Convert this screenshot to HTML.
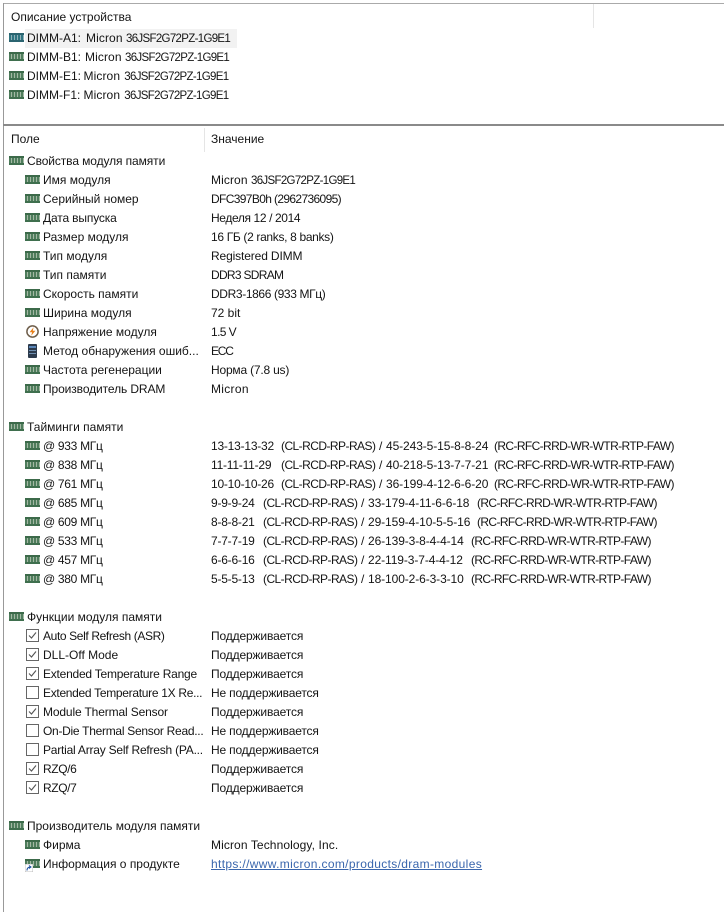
<!DOCTYPE html>
<html lang="ru"><head><meta charset="utf-8"><style>
html,body{margin:0;padding:0;background:#fff}
body{position:relative;width:724px;height:912px;overflow:hidden;font-family:"Liberation Sans",sans-serif;font-size:12px;color:#141414}
.t{position:absolute;height:19px;line-height:19px;white-space:nowrap}
.l{position:absolute;background:#a0a0a0}
.m{position:absolute;width:15px;height:9px;background:repeating-linear-gradient(90deg,#4f7d5c 0 2px,#a3b8a4 2px 3px);border-top:2px solid #3c6a4a;border-bottom:2px solid #3f6f4e;box-sizing:border-box}
.c{position:absolute;width:11px;height:11px;border:1px solid #666;background:#fff}
.c svg{position:absolute;left:0;top:0}
.t.pn{font-size:11.5px;letter-spacing:-.68px;line-height:21px}
.k{letter-spacing:.1px}
.p{letter-spacing:-.14px}
.n{letter-spacing:-.18px}
.a{letter-spacing:-.3px}
.x1{letter-spacing:-.22px}
.x2{letter-spacing:-.55px}
.x3{letter-spacing:-.1px}
.x4{letter-spacing:-.62px}
</style></head><body>
<div class="l" style="left:3px;top:3px;width:721px;height:1px;background:#aaa"></div>
<div class="l" style="left:3px;top:3px;width:1px;height:909px;background:#999"></div>
<div class="l" style="left:3px;top:124px;width:721px;height:2px;background:#8a8a8a"></div>
<div class="l" style="left:593px;top:4px;width:1px;height:24px;background:#e5e5e5"></div>
<div class="l" style="left:204px;top:128px;width:1px;height:24px;background:#e5e5e5"></div>
<div class="l" style="left:25px;top:29px;width:212px;height:19px;background:#f2f2f2"></div>

<div class="t" style="left:11px;top:8px">Описание устройства</div>
<div class="m" style="left:9px;top:33px;background:repeating-linear-gradient(90deg,#2f7480 0 2px,#8fb0b8 2px 3px);border-color:#2b6470"></div><div class="t" style="left:27px;top:29px">DIMM-A1:</div><div class="t k" style="left:86px;top:29px">Micron</div><div class="t pn" style="left:126px;top:29px">36JSF2G72PZ-1G9E1</div>
<div class="m" style="left:9px;top:52px"></div><div class="t" style="left:27px;top:48px">DIMM-B1:</div><div class="t k" style="left:85px;top:48px">Micron</div><div class="t pn" style="left:125px;top:48px">36JSF2G72PZ-1G9E1</div>
<div class="m" style="left:9px;top:71px"></div><div class="t" style="left:27px;top:67px">DIMM-E1:</div><div class="t k" style="left:83.5px;top:67px">Micron</div><div class="t pn" style="left:124.3px;top:67px">36JSF2G72PZ-1G9E1</div>
<div class="m" style="left:9px;top:90px"></div><div class="t" style="left:27px;top:86px">DIMM-F1:</div><div class="t k" style="left:83.5px;top:86px">Micron</div><div class="t pn" style="left:124.3px;top:86px">36JSF2G72PZ-1G9E1</div>

<div class="t" style="left:11px;top:130px">Поле</div>
<div class="t" style="left:211px;top:130px">Значение</div>

<div class="m" style="left:9px;top:156px"></div><div class="t" style="left:27px;top:152px;letter-spacing:-.1px">Свойства модуля памяти</div>
<div class="m" style="left:25px;top:175px"></div><div class="t" style="left:43px;top:171px">Имя модуля</div><div class="t k" style="left:211px;top:171px">Micron</div><div class="t pn" style="left:251px;top:171px">36JSF2G72PZ-1G9E1</div>
<div class="m" style="left:25px;top:194px"></div><div class="t" style="left:43px;top:190px">Серийный номер</div><div class="t" style="left:211px;top:190px;letter-spacing:-.64px">DFC397B0h (2962736095)</div>
<div class="m" style="left:25px;top:213px"></div><div class="t" style="left:43px;top:209px;letter-spacing:-.15px">Дата выпуска</div><div class="t" style="left:211px;top:209px;letter-spacing:-.38px">Неделя 12 / 2014</div>
<div class="m" style="left:25px;top:232px"></div><div class="t" style="left:43px;top:228px">Размер модуля</div><div class="t" style="left:211px;top:228px;letter-spacing:-.33px">16 ГБ (2 ranks, 8 banks)</div>
<div class="m" style="left:25px;top:251px"></div><div class="t" style="left:43px;top:247px">Тип модуля</div><div class="t" style="left:211px;top:247px;letter-spacing:-.13px">Registered DIMM</div>
<div class="m" style="left:25px;top:270px"></div><div class="t" style="left:43px;top:266px">Тип памяти</div><div class="t" style="left:211px;top:266px;letter-spacing:-.7px">DDR3 SDRAM</div>
<div class="m" style="left:25px;top:289px"></div><div class="t" style="left:43px;top:285px">Скорость памяти</div><div class="t" style="left:211px;top:285px;letter-spacing:-.37px">DDR3-1866 (933 МГц)</div>
<div class="m" style="left:25px;top:308px"></div><div class="t" style="left:43px;top:304px">Ширина модуля</div><div class="t" style="left:211px;top:304px">72 bit</div>
<svg style="position:absolute;left:26px;top:325px" width="13" height="13" viewBox="0 0 13 13"><circle cx="6.5" cy="6.5" r="5.6" fill="#fff" stroke="#6f5f4c" stroke-width="1.5"/><path d="M7.6 2.2 3.6 7.2h2.5L5.2 10.8 9.4 5.8H6.8z" fill="#e8801a"/></svg>
<div class="t" style="left:43px;top:323px">Напряжение модуля</div><div class="t" style="left:211px;top:323px;letter-spacing:-.6px">1.5 V</div>
<svg style="position:absolute;left:28px;top:344px" width="9" height="14" viewBox="0 0 9 14"><rect width="9" height="14" rx="1" fill="#2c3a4c"/><rect x="1" y="2" width="7" height="2" fill="#5a86b8"/><rect x="1" y="6" width="7" height="1" fill="#6f8fb0"/><rect x="1" y="9" width="7" height="1" fill="#6f8fb0"/></svg>
<div class="t" style="left:43px;top:342px">Метод обнаружения ошиб...</div><div class="t" style="left:211px;top:342px;letter-spacing:-1.2px">ECC</div>
<div class="m" style="left:25px;top:365px"></div><div class="t" style="left:43px;top:361px">Частота регенерации</div><div class="t" style="left:211px;top:361px;letter-spacing:-.2px">Норма (7.8 us)</div>
<div class="m" style="left:25px;top:384px"></div><div class="t" style="left:43px;top:380px;letter-spacing:-.1px">Производитель DRAM</div><div class="t" style="left:211px;top:380px;letter-spacing:.3px">Micron</div>

<div class="m" style="left:9px;top:422px"></div><div class="t" style="left:27px;top:418px">Тайминги памяти</div>
<div class="m" style="left:25px;top:441px"></div><div class="t a" style="left:43px;top:437px">@ 933 МГц</div><div class="t x1" style="left:211px;top:437px">13-13-13-32</div><div class="t x2" style="left:281px;top:437px">(CL-RCD-RP-RAS)</div><div class="t" style="left:379px;top:437px">/</div><div class="t x3" style="left:386px;top:437px">45-243-5-15-8-8-24</div><div class="t x4" style="left:494px;top:437px">(RC-RFC-RRD-WR-WTR-RTP-FAW)</div>
<div class="m" style="left:25px;top:460px"></div><div class="t a" style="left:43px;top:456px">@ 838 МГц</div><div class="t x1" style="left:211px;top:456px">11-11-11-29</div><div class="t x2" style="left:281px;top:456px">(CL-RCD-RP-RAS)</div><div class="t" style="left:379px;top:456px">/</div><div class="t x3" style="left:386px;top:456px">40-218-5-13-7-7-21</div><div class="t x4" style="left:494px;top:456px">(RC-RFC-RRD-WR-WTR-RTP-FAW)</div>
<div class="m" style="left:25px;top:479px"></div><div class="t a" style="left:43px;top:475px">@ 761 МГц</div><div class="t x1" style="left:211px;top:475px">10-10-10-26</div><div class="t x2" style="left:281px;top:475px">(CL-RCD-RP-RAS)</div><div class="t" style="left:379px;top:475px">/</div><div class="t x3" style="left:386px;top:475px">36-199-4-12-6-6-20</div><div class="t x4" style="left:494px;top:475px">(RC-RFC-RRD-WR-WTR-RTP-FAW)</div>
<div class="m" style="left:25px;top:498px"></div><div class="t a" style="left:43px;top:494px">@ 685 МГц</div><div class="t x1" style="left:211px;top:494px">9-9-9-24</div><div class="t x2" style="left:263px;top:494px">(CL-RCD-RP-RAS)</div><div class="t" style="left:361px;top:494px">/</div><div class="t x3" style="left:368px;top:494px">33-179-4-11-6-6-18</div><div class="t x4" style="left:477px;top:494px">(RC-RFC-RRD-WR-WTR-RTP-FAW)</div>
<div class="m" style="left:25px;top:517px"></div><div class="t a" style="left:43px;top:513px">@ 609 МГц</div><div class="t x1" style="left:211px;top:513px">8-8-8-21</div><div class="t x2" style="left:263px;top:513px">(CL-RCD-RP-RAS)</div><div class="t" style="left:361px;top:513px">/</div><div class="t x3" style="left:368px;top:513px">29-159-4-10-5-5-16</div><div class="t x4" style="left:477px;top:513px">(RC-RFC-RRD-WR-WTR-RTP-FAW)</div>
<div class="m" style="left:25px;top:536px"></div><div class="t a" style="left:43px;top:532px">@ 533 МГц</div><div class="t x1" style="left:211px;top:532px">7-7-7-19</div><div class="t x2" style="left:263px;top:532px">(CL-RCD-RP-RAS)</div><div class="t" style="left:361px;top:532px">/</div><div class="t x3" style="left:368px;top:532px">26-139-3-8-4-4-14</div><div class="t x4" style="left:471px;top:532px">(RC-RFC-RRD-WR-WTR-RTP-FAW)</div>
<div class="m" style="left:25px;top:555px"></div><div class="t a" style="left:43px;top:551px">@ 457 МГц</div><div class="t x1" style="left:211px;top:551px">6-6-6-16</div><div class="t x2" style="left:263px;top:551px">(CL-RCD-RP-RAS)</div><div class="t" style="left:361px;top:551px">/</div><div class="t x3" style="left:368px;top:551px">22-119-3-7-4-4-12</div><div class="t x4" style="left:471px;top:551px">(RC-RFC-RRD-WR-WTR-RTP-FAW)</div>
<div class="m" style="left:25px;top:574px"></div><div class="t a" style="left:43px;top:570px">@ 380 МГц</div><div class="t x1" style="left:211px;top:570px">5-5-5-13</div><div class="t x2" style="left:263px;top:570px">(CL-RCD-RP-RAS)</div><div class="t" style="left:361px;top:570px">/</div><div class="t x3" style="left:368px;top:570px">18-100-2-6-3-3-10</div><div class="t x4" style="left:471px;top:570px">(RC-RFC-RRD-WR-WTR-RTP-FAW)</div>

<div class="m" style="left:9px;top:612px"></div><div class="t" style="left:27px;top:608px">Функции модуля памяти</div>
<div class="c" style="left:26px;top:629px"><svg width="11" height="11"><path d="M2 5.5 4.5 8 9 2.5" fill="none" stroke="#555" stroke-width="1.1"/></svg></div><div class="t" style="left:43px;top:627px;letter-spacing:-.37px">Auto Self Refresh (ASR)</div><div class="t p" style="left:211px;top:627px">Поддерживается</div>
<div class="c" style="left:26px;top:648px"><svg width="11" height="11"><path d="M2 5.5 4.5 8 9 2.5" fill="none" stroke="#555" stroke-width="1.1"/></svg></div><div class="t" style="left:43px;top:646px">DLL-Off Mode</div><div class="t p" style="left:211px;top:646px">Поддерживается</div>
<div class="c" style="left:26px;top:667px"><svg width="11" height="11"><path d="M2 5.5 4.5 8 9 2.5" fill="none" stroke="#555" stroke-width="1.1"/></svg></div><div class="t" style="left:43px;top:665px;letter-spacing:-.23px">Extended Temperature Range</div><div class="t p" style="left:211px;top:665px">Поддерживается</div>
<div class="c" style="left:26px;top:686px"></div><div class="t" style="left:43px;top:684px;letter-spacing:-.3px">Extended Temperature 1X Re...</div><div class="t n" style="left:211px;top:684px">Не поддерживается</div>
<div class="c" style="left:26px;top:705px"><svg width="11" height="11"><path d="M2 5.5 4.5 8 9 2.5" fill="none" stroke="#555" stroke-width="1.1"/></svg></div><div class="t" style="left:43px;top:703px;letter-spacing:-.14px">Module Thermal Sensor</div><div class="t p" style="left:211px;top:703px">Поддерживается</div>
<div class="c" style="left:26px;top:724px"></div><div class="t" style="left:43px;top:722px;letter-spacing:-.28px">On-Die Thermal Sensor Read...</div><div class="t n" style="left:211px;top:722px">Не поддерживается</div>
<div class="c" style="left:26px;top:743px"></div><div class="t" style="left:43px;top:741px;letter-spacing:-.22px">Partial Array Self Refresh (PA...</div><div class="t n" style="left:211px;top:741px">Не поддерживается</div>
<div class="c" style="left:26px;top:762px"><svg width="11" height="11"><path d="M2 5.5 4.5 8 9 2.5" fill="none" stroke="#555" stroke-width="1.1"/></svg></div><div class="t" style="left:43px;top:760px;letter-spacing:-.4px">RZQ/6</div><div class="t p" style="left:211px;top:760px">Поддерживается</div>
<div class="c" style="left:26px;top:781px"><svg width="11" height="11"><path d="M2 5.5 4.5 8 9 2.5" fill="none" stroke="#555" stroke-width="1.1"/></svg></div><div class="t" style="left:43px;top:779px;letter-spacing:-.4px">RZQ/7</div><div class="t p" style="left:211px;top:779px">Поддерживается</div>

<div class="m" style="left:9px;top:821px"></div><div class="t" style="left:27px;top:817px">Производитель модуля памяти</div>
<div class="m" style="left:25px;top:840px"></div><div class="t" style="left:43px;top:836px">Фирма</div><div class="t" style="left:211px;top:836px;letter-spacing:.1px">Micron Technology, Inc.</div>
<div class="m" style="left:25px;top:859px"></div>
<svg style="position:absolute;left:25px;top:864px" width="8" height="8" viewBox="0 0 8 8"><rect width="8" height="8" fill="#fff" stroke="#999" stroke-width=".6"/><path d="M2 6.5C2 4 3.5 3 5.5 3M4 1.5 6 3 4 4.5" fill="none" stroke="#1c4fa0"/></svg>
<div class="t" style="left:43px;top:855px">Информация о продукте</div><div class="t" style="left:211px;top:855px;color:#3a66ad;text-decoration:underline;letter-spacing:.34px">https://www.micron.com/products/dram-modules</div>
</body></html>
